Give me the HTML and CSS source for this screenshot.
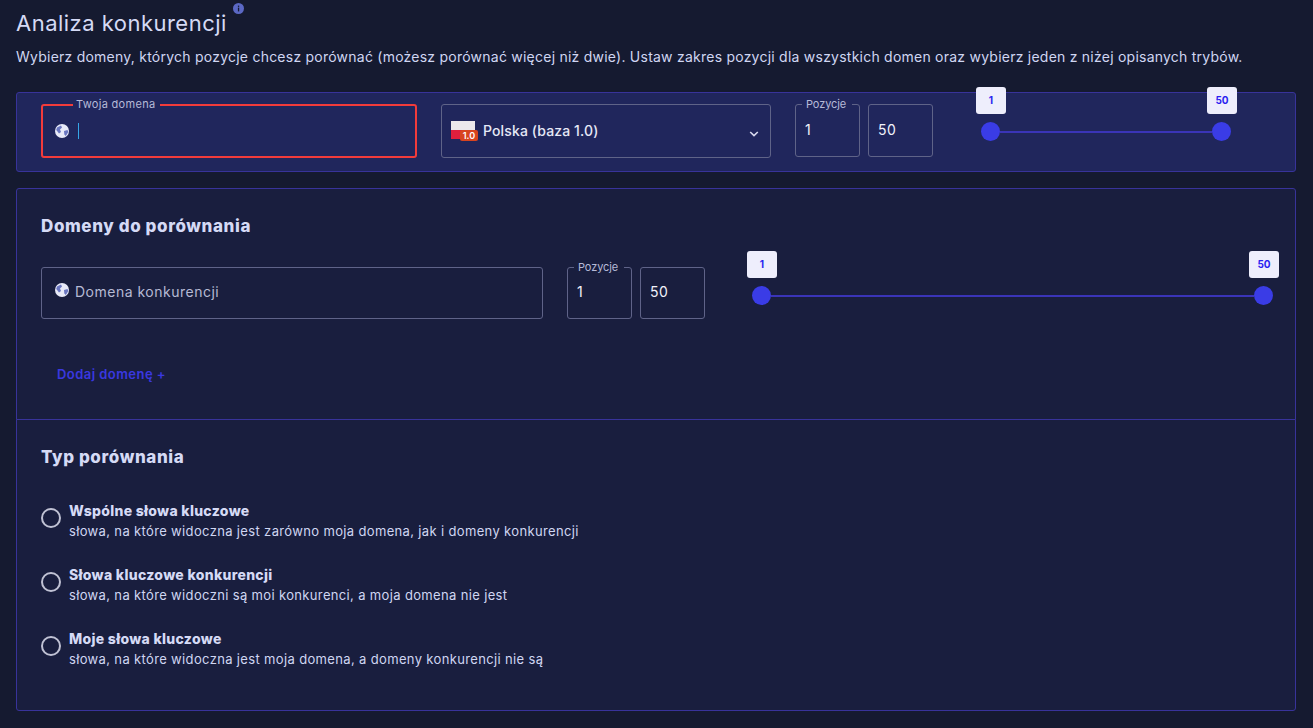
FILE: index.html
```html
<!DOCTYPE html>
<html lang="pl">
<head>
<meta charset="utf-8">
<title>Analiza konkurencji</title>
<link rel="stylesheet" href="styles.css">
</head>
<body>
<main class="page">
  <header class="head">
    <h1 class="title">Analiza konkurencji</h1>
    <svg class="info" viewBox="0 0 11 11" width="11" height="11"><circle cx="5.5" cy="5.5" r="5.5" fill="#5b68c4"/><rect x="4.9" y="4.6" width="1.3" height="3.8" fill="#151a30"/><rect x="4.9" y="2.6" width="1.3" height="1.3" fill="#151a30"/></svg>
  </header>
  <p class="lead">Wybierz domeny, których pozycje chcesz porównać (możesz porównać więcej niż dwie). Ustaw zakres pozycji dla wszystkich domen oraz wybierz jeden z niżej opisanych trybów.</p>

  <section class="bar">
    <fieldset class="field field-error field-own">
      <legend class="legend legend-own">Twoja domena</legend>
      <div class="field-row">
        <svg class="globe" viewBox="0 0 14 14" width="14" height="14"><circle cx="7" cy="7" r="7" fill="#e8eaf8"/><path d="M2 3.5 6 1.5 7 3.5 5 5.5 6 8 4 9.5 2.5 7.5 1.2 6ZM9 7l3.5-1 .8 2-2.5 4-1.5-1.5Z" fill="#6a76c0"/></svg>
        <span class="caret"></span>
      </div>
    </fieldset>
    <div class="select">
      <span class="flag"><span class="flag-badge">1.0</span></span>
      <span class="select-text">Polska (baza 1.0)</span>
      <svg class="chevron" viewBox="0 0 10 6" width="10" height="6"><path d="M1.2 1 5 4.6 8.8 1" fill="none" stroke="#d8daee" stroke-width="1.6"/></svg>
    </div>
    <div class="range">
      <fieldset class="field field-num">
        <legend class="legend legend-num">Pozycje</legend>
        <span class="num">1</span>
      </fieldset>
      <fieldset class="field field-num field-plain">
        <span class="num">50</span>
      </fieldset>
    </div>
    <div class="slider slider-short">
      <span class="thumb"><span class="bubble">1</span></span>
      <span class="line"></span>
      <span class="thumb"><span class="bubble">50</span></span>
    </div>
  </section>

  <section class="card card-domains">
    <h2 class="card-title">Domeny do porównania</h2>
    <div class="domain-row">
      <fieldset class="field field-comp">
        <div class="field-row">
          <svg class="globe globe-up" viewBox="0 0 14 14" width="14" height="14"><circle cx="7" cy="7" r="7" fill="#e8eaf8"/><path d="M2 3.5 6 1.5 7 3.5 5 5.5 6 8 4 9.5 2.5 7.5 1.2 6ZM9 7l3.5-1 .8 2-2.5 4-1.5-1.5Z" fill="#6a76c0"/></svg>
          <span class="placeholder">Domena konkurencji</span>
        </div>
      </fieldset>
      <div class="range">
        <fieldset class="field field-num">
          <legend class="legend legend-num">Pozycje</legend>
          <span class="num">1</span>
        </fieldset>
        <fieldset class="field field-num field-plain">
          <span class="num">50</span>
        </fieldset>
      </div>
      <div class="slider slider-long">
        <span class="thumb"><span class="bubble">1</span></span>
        <span class="line"></span>
        <span class="thumb"><span class="bubble">50</span></span>
      </div>
    </div>
    <a class="add" href="#">Dodaj domenę +</a>
  </section>

  <section class="card card-types">
    <h2 class="card-title">Typ porównania</h2>
    <div class="options">
      <div class="option">
        <span class="radio"></span>
        <div class="option-text"><strong class="option-name">Wspólne słowa kluczowe</strong><span class="option-desc">słowa, na które widoczna jest zarówno moja domena, jak i domeny konkurencji</span></div>
      </div>
      <div class="option">
        <span class="radio"></span>
        <div class="option-text"><strong class="option-name">Słowa kluczowe konkurencji</strong><span class="option-desc">słowa, na które widoczni są moi konkurenci, a moja domena nie jest</span></div>
      </div>
      <div class="option">
        <span class="radio"></span>
        <div class="option-text"><strong class="option-name">Moje słowa kluczowe</strong><span class="option-desc">słowa, na które widoczna jest moja domena, a domeny konkurencji nie są</span></div>
      </div>
    </div>
  </section>
</main>
</body>
</html>
```
FILE: styles.css
```css
* { box-sizing: border-box; }
html, body { margin: 0; height: 100%; }
body {
  background: #151a30;
  color: #d5daf5;
  font-family: Inter, "Noto Sans", sans-serif;
  overflow: hidden;
}
.page { padding: 0 17px 0 16px; }
.head { display: flex; align-items: flex-start; height: 45px; padding-top: 9px; }
.title { margin: 0; font-size: 22px; line-height: 29px; font-weight: 400; letter-spacing: .48px; color: #d5daf5; }
.info { margin: -6px 0 0 6px; }
.lead { margin: 0; font-size: 14px; line-height: 24px; height: 47px; letter-spacing: .235px; color: #d0d6f2; white-space: nowrap; }

.bar {
  display: flex; align-items: flex-start;
  height: 80px; padding: 6px 0 0 24px;
  background: #20265c; border: 1px solid #38339a; border-radius: 3px;
}
.field {
  flex: none;
  margin: 0; padding: 0; min-width: 0;
  border: 1px solid #5f6388; border-radius: 3px;
}
.legend { font-size: 11px; line-height: 11px; color: #b6bad8; }
.legend-own { margin-left: 30px; padding: 0 5px 0 3px; letter-spacing: .3px; }
.legend-num { margin-left: -3px; padding: 0 6px 0 4px; letter-spacing: -.1px; }
.field-own { width: 376px; height: 59px; margin-right: 24px; }
.field-error { border: 2px solid #f23b3b; }
.field-row { display: flex; align-items: center; height: 100%; }
.field-own .field-row { height: 42px; padding-left: 12px; }
.globe { flex: none; }
.caret { width: 1px; height: 16px; margin-left: 9px; background: #35a6e8; }
.select {
  display: flex; align-items: center;
  width: 330px; height: 54px; margin: 5px 24px 0 0; padding: 0 11px 2px 9px;
  border: 1px solid #5f6388; border-radius: 3px;
}
.flag {
  position: relative; width: 24px; height: 18px; margin-right: 8px;
  background: linear-gradient(#ebe8ec 50%, #de1f3d 50%);
}
.flag-badge {
  position: absolute; left: 9px; top: 9px; width: 18px; height: 11px;
  background: #d8441f; border-radius: 2px;
  font-size: 9px; line-height: 11px; font-weight: 600; color: #fff; text-align: center;
}
.select-text { flex: 1; font-size: 14px; font-weight: 500; letter-spacing: .13px; color: #e6e8f6; }
.chevron { margin-top: 8px; }
.range { display: flex; flex: none; gap: 8px; }
.field-num { display: flex; align-items: center; width: 65px; height: 58px; padding: 0 9px 7px; }
.field-plain { height: 53px; margin-top: 5px; padding-bottom: 2px; }
.domain-row .field-num { height: 57px; padding-bottom: 9px; }
.domain-row .field-plain { height: 52px; padding-bottom: 4px; }
.num { font-size: 14px; letter-spacing: .4px; color: #f1f2fb; }
.field-comp { width: 502px; height: 52px; margin-right: 24px; }
.field-comp .field-row { padding: 0 0 4px 13px; }
.globe-up { margin-top: -2px; }
.placeholder { margin-left: 6px; font-size: 14px; letter-spacing: .5px; color: #b6bad4; }

.slider { display: flex; flex: none; align-items: center; height: 19px; }
.slider-short { width: 250px; margin: 23px 0 0 48px; }
.slider-long { width: 521px; margin: 19px 0 0 47px; }
.thumb { position: relative; flex: none; width: 19px; height: 19px; border-radius: 50%; background: #3a3ce6; }
.line { flex: 1; height: 2px; background: #3a34b8; }
.bubble {
  position: absolute; left: -5px; top: -35px;
  width: 30px; height: 27px; border-radius: 3px;
  background: #eeeefc; color: #2a1ff0;
  font-size: 10px; line-height: 27px; font-weight: 700; text-align: center;
}

.card { background: #191e3e; border: 1px solid #38339a; padding: 0 24px; }
.card-domains { height: 232px; margin-top: 16px; padding-top: 26px; border-radius: 3px 3px 0 0; }
.card-types { height: 292px; margin-top: -1px; padding-top: 26px; border-radius: 0 0 3px 3px; }
.card-title { margin: 0; font-size: 17px; line-height: 22px; font-weight: 800; letter-spacing: .6px; color: #d5daf5; }
.domain-row { display: flex; align-items: flex-start; margin-top: 30px; height: 52px; }
.domain-row .range { margin-top: -5px; }
.add { display: block; margin: 46px 0 0 16px; font-size: 13px; line-height: 18px; font-weight: 600; letter-spacing: .45px; color: #3a38e0; text-decoration: none; }
.options { display: flex; flex-direction: column; gap: 20px; margin-top: 31px; }
.option { display: flex; align-items: center; gap: 8px; height: 44px; }
.radio { flex: none; width: 20px; height: 20px; border: 2px solid #c0c2d4; border-radius: 50%; margin-bottom: 6px; }
.option-text { display: flex; flex-direction: column; gap: 2px; }
.option-name { font-size: 14px; line-height: 18px; font-weight: 800; letter-spacing: .3px; color: #d5daf5; }
.option-desc { font-size: 13px; line-height: 18px; letter-spacing: .35px; color: #d0d6f2; }
```
